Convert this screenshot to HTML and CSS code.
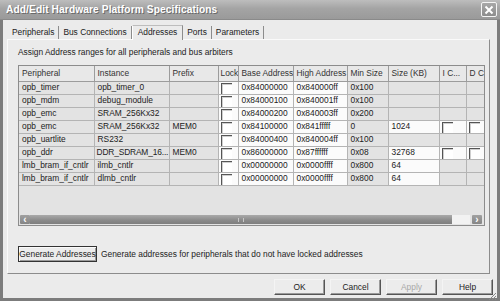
FILE: index.html
```html
<!DOCTYPE html>
<html lang="en">

<head>
    <meta charset="UTF-8">
    <title>Add/Edit Hardware Platform Specifications</title>
    <link rel="stylesheet" href="styles.css">
</head>

<body>
    <main class="window">
        <header class="titlebar">
            <h1>Add/Edit Hardware Platform Specifications</h1>
            <button class="close" aria-label="Close">
                <svg width="10" height="10" viewBox="0 0 10 10"><path d="M1.5 1.5 L8.5 8.5 M8.5 1.5 L1.5 8.5" stroke="#fff" stroke-width="2" /></svg>
            </button>
        </header>

        <section class="dialog">
            <nav class="tabs">
                <p class="tab">Peripherals</p>
                <p class="tab">Bus Connections</p>
                <p class="tab active">Addresses</p>
                <p class="tab">Ports</p>
                <p class="tab">Parameters</p>
            </nav>

            <article class="panel">
                <p class="desc">Assign Address ranges for all peripherals and bus arbiters</p>

                <div class="gridbox">
                    <div class="gridview">
                        <table class="grid">
                            <colgroup>
                                <col style="width:75px">
                                <col style="width:75px">
                                <col style="width:49px">
                                <col style="width:20px">
                                <col style="width:55px">
                                <col style="width:54px">
                                <col style="width:41px">
                                <col style="width:51px">
                                <col style="width:27px">
                                <col style="width:28px">
                            </colgroup>
                            <thead>
                                <tr>
                                    <th>Peripheral</th>
                                    <th>Instance</th>
                                    <th>Prefix</th>
                                    <th class="lock">Lock</th>
                                    <th>Base Address</th>
                                    <th>High Address</th>
                                    <th>Min Size</th>
                                    <th>Size (KB)</th>
                                    <th>I C...</th>
                                    <th>D C</th>
                                </tr>
                            </thead>
                            <tbody>
                                <tr>
                                    <td>opb_timer</td><td>opb_timer_0</td><td></td>
                                    <td class="w"><span class="chk"></span></td>
                                    <td class="w">0x84000000</td><td class="w">0x840000ff</td><td>0x100</td>
                                    <td></td><td></td><td></td>
                                </tr>
                                <tr>
                                    <td>opb_mdm</td><td>debug_module</td><td></td>
                                    <td class="w"><span class="chk"></span></td>
                                    <td class="w">0x84000100</td><td class="w">0x840001ff</td><td>0x100</td>
                                    <td></td><td></td><td></td>
                                </tr>
                                <tr>
                                    <td>opb_emc</td><td>SRAM_256Kx32</td><td></td>
                                    <td class="w"><span class="chk"></span></td>
                                    <td class="w">0x84000200</td><td class="w">0x840003ff</td><td>0x200</td>
                                    <td></td><td></td><td></td>
                                </tr>
                                <tr>
                                    <td>opb_emc</td><td>SRAM_256Kx32</td><td>MEM0</td>
                                    <td class="w"><span class="chk"></span></td>
                                    <td class="w">0x84100000</td><td class="w">0x841fffff</td><td>0</td>
                                    <td class="w">1024</td>
                                    <td class="w"><span class="chk"></span></td>
                                    <td class="w"><span class="chk"></span></td>
                                </tr>
                                <tr>
                                    <td>opb_uartlite</td><td>RS232</td><td></td>
                                    <td class="w"><span class="chk"></span></td>
                                    <td class="w">0x84000400</td><td class="w">0x840004ff</td><td>0x100</td>
                                    <td></td><td></td><td></td>
                                </tr>
                                <tr>
                                    <td>opb_ddr</td><td class="tight">DDR_SDRAM_16...</td><td>MEM0</td>
                                    <td class="w"><span class="chk"></span></td>
                                    <td class="w">0x86000000</td><td class="w">0x87ffffff</td><td>0x08</td>
                                    <td class="w">32768</td>
                                    <td class="w"><span class="chk"></span></td>
                                    <td class="w"><span class="chk"></span></td>
                                </tr>
                                <tr>
                                    <td>lmb_bram_if_cntlr</td><td>ilmb_cntlr</td><td></td>
                                    <td class="w"><span class="chk"></span></td>
                                    <td class="w">0x00000000</td><td class="w">0x0000ffff</td><td>0x800</td>
                                    <td class="w">64</td><td></td><td></td>
                                </tr>
                                <tr>
                                    <td>lmb_bram_if_cntlr</td><td>dlmb_cntlr</td><td></td>
                                    <td class="w"><span class="chk"></span></td>
                                    <td class="w">0x00000000</td><td class="w">0x0000ffff</td><td>0x800</td>
                                    <td class="w">64</td><td></td><td></td>
                                </tr>
                            </tbody>
                        </table>
                    </div>

                    <div class="hscroll">
                        <span class="arrow">&#8249;</span>
                        <span class="thumb"><span class="grip"></span></span>
                        <span class="track"></span>
                        <span class="arrow">&#8250;</span>
                    </div>
                </div>

                <footer class="gen">
                    <button class="btn gen-btn">Generate Addresses</button>
                    <p>Generate addresses for peripherals that do not have locked addresses</p>
                </footer>
            </article>

            <footer class="actions">
                <button class="btn">OK</button>
                <button class="btn">Cancel</button>
                <button class="btn disabled">Apply</button>
                <button class="btn">Help</button>
                <svg class="grip-corner" width="9" height="9" viewBox="0 0 9 9">
                    <path d="M8 1 L1 8 M8 4 L4 8 M8 7 L7 8" stroke="#888" stroke-width="1" />
                </svg>
            </footer>
        </section>
    </main>
</body>

</html>
```

FILE: styles.css
```css
*,
*::before,
*::after {
  box-sizing: border-box;
}

body {
  margin: 0;
  background: #d8d8d8;
  font-family: "Liberation Sans", Arial, sans-serif;
  font-size: 8.4px;
  color: #222;
}

p {
  margin: 0;
}

.window {
  display: flex;
  flex-direction: column;
  width: 500px;
  height: 301px;
  border: 3px solid #7c7c7c;
  border-top: 0;
  background: #ebebeb;
}

.titlebar {
  display: flex;
  align-items: center;
  justify-content: space-between;
  height: 20px;
  margin: 0 -3px;
  padding: 0 3px 0 6px;
  background: linear-gradient(#bdbdbd, #a4a4a4 45%, #9a9a9a);
  border-bottom: 1px solid #8a8a8a;
}

.titlebar h1 {
  margin: 0;
  font-size: 10.2px;
  font-weight: bold;
  color: #fff;
  text-shadow: 1px 1px 0 #6a6a6a;
  letter-spacing: 0.1px;
}

.close {
  display: flex;
  align-items: center;
  justify-content: center;
  width: 16px;
  height: 15px;
  padding: 0;
  border: 1px solid #f4f4f4;
  border-radius: 2px;
  background: linear-gradient(#a8a8a8, #8c8c8c);
}

.dialog {
  display: flex;
  flex-direction: column;
  flex: 1;
  padding: 0 4px 0 4px;
}

/* tab strip */
.tabs {
  display: flex;
  align-items: flex-end;
  height: 19px;
  padding-left: 3px;
}

.tab {
  height: 13px;
  padding: 0 4px;
  line-height: 12px;
  border-right: 1px solid #8c8c8c;
  color: #222;
  white-space: nowrap;
}

.tab:first-child {
  padding-left: 2px;
}

.tab.active {
  height: 15px;
  line-height: 13px;
  padding: 0 5px;
  margin-bottom: -1px;
  background: #ebebeb;
  border: 1px solid #bdbdbd;
  border-bottom: 0;
  border-right: 1px solid #8c8c8c;
  border-left: 1px solid #fff;
  z-index: 1;
}

.panel {
  display: flex;
  flex-direction: column;
  height: 235px;
  margin-right: 3px;
  padding: 7px 4px 0 10px;
  border: 1px solid #fafafa;
  border-right-color: #8c8c8c;
  border-bottom-color: #8c8c8c;
}

.desc {
  height: 18px;
  line-height: 10px;
}

/* data grid */
.gridbox {
  display: flex;
  flex-direction: column;
  height: 161px;
  border: 1px solid #8c8c8c;
  background: #e3e3e3;
}

.gridview {
  flex: 1;
  overflow: hidden;
}

.grid {
  width: 475px;
  table-layout: fixed;
  border-collapse: collapse;
}

.grid th,
.grid td {
  height: 13px;
  padding: 0 0 0 3px;
  border: 1px solid #b4b4b4;
  text-align: left;
  white-space: nowrap;
  overflow: hidden;
  line-height: 11px;
}

.grid th {
  height: 15px;
  font-weight: normal;
  color: #333;
  background: #e8e8e8;
  border-color: #9c9c9c;
  border-top: 0;
}

.grid th:first-child,
.grid td:first-child {
  border-left: 0;
}

.grid th.lock {
  padding-left: 2px;
}

.grid td {
  background: #e3e3e3;
}

.grid td.w {
  background: #fbfbfb;
}

.grid td.tight {
  padding-left: 2px;
  letter-spacing: -0.15px;
}

.chk {
  display: block;
  width: 11px;
  height: 11px;
  margin: 1px 0 0 -1px;
  border-top: 1px solid #555;
  border-left: 1px solid #555;
  background: #fff;
  box-shadow: inset 1px 1px 0 #cfcfcf;
}

/* horizontal scrollbar */
.hscroll {
  display: flex;
  height: 9px;
  margin: 0 0 1px 1px;
  padding-right: 2px;
}

.hscroll .arrow {
  display: flex;
  align-items: center;
  justify-content: center;
  width: 10px;
  font-size: 10px;
  line-height: 9px;
  font-weight: bold;
  color: #fff;
  background: linear-gradient(#a0a0a0, #858585);
  border-radius: 1px;
}

.hscroll .thumb {
  display: flex;
  align-items: center;
  justify-content: center;
  width: 422px;
  background: linear-gradient(#aaaaaa, #8a8a8a 60%, #7e7e7e);
}

.hscroll .grip {
  width: 6px;
  height: 4px;
  border-left: 1px solid #c8c8c8;
  border-right: 1px solid #c8c8c8;
}

.hscroll .track {
  flex: 1;
  margin-right: 2px;
  background: #f2f2f2;
}

/* buttons */
.btn {
  height: 16px;
  padding: 0;
  border: 1px solid #555;
  border-top-color: #f4f4f4;
  border-left-color: #f4f4f4;
  background: #ececec;
  box-shadow: inset -1px -1px 0 #9a9a9a;
  font-family: inherit;
  font-size: 8.4px;
  color: #222;
  white-space: nowrap;
}

.gen {
  display: flex;
  align-items: center;
  gap: 4px;
  margin-top: 20px;
}

.gen-btn {
  flex: 0 0 79px;
  border: 1px solid #333;
  box-shadow: inset 1px 1px 0 #fafafa, inset -1px -1px 0 #9a9a9a;
}

.actions {
  position: relative;
  display: flex;
  justify-content: flex-end;
  gap: 5px;
  margin-top: 5px;
  padding-right: 0;
}

.actions .btn {
  width: 51px;
}

.btn.disabled {
  color: #a8a8a8;
}

.grip-corner {
  position: absolute;
  right: -4px;
  bottom: -6px;
}
```
